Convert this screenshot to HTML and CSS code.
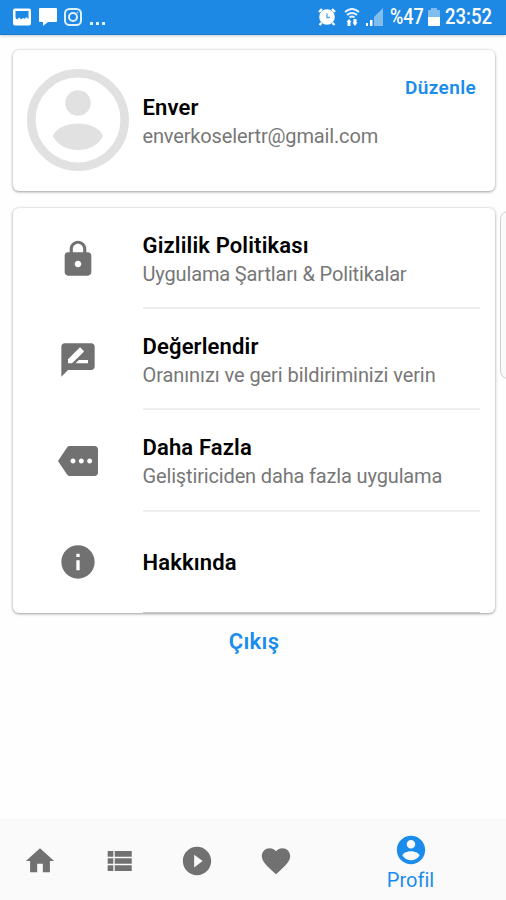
FILE: index.html
```html
<!DOCTYPE html>
<html lang="tr">
<head>
<meta charset="utf-8">
<title>Profil</title>
<link rel="stylesheet" href="styles.css">
</head>
<body>
<header class="status">
  <div class="status-left">
    <svg width="18" height="18" viewBox="0 0 18 18"><path fill="#fff" fill-rule="evenodd" d="M2 .5h14q2 0 2 2v13q0 2-2 2H2q-2 0-2-2v-13q0-2 2-2zM2.500 3v7l1.500 1.500 2.500-2 1.500 2 2-1.500 2 1 1-2 2.500 2V3z"/></svg>
    <svg width="18" height="18" viewBox="0 0 18 18"><path fill="#fff" d="M1 0h16q1 0 1 1v12q0 1-1 1H9l-5 4v-4H1q-1 0-1-1V1q0-1 1-1z"/></svg>
    <svg width="18" height="18" viewBox="0 0 18 18" fill="none" stroke="#dff1ff" stroke-width="2"><rect x="1" y="1" width="16" height="16" rx="4.500"/><circle cx="9" cy="9" r="4"/><circle cx="13.500" cy="4.500" r=".4" stroke-width="1"/></svg>
    <svg class="dots" width="16" height="4" viewBox="0 0 16 4" fill="#dff1ff"><path d="M0 0h3v3H0zM6 0h3v3H6zM12 0h3v3h-3z"/></svg>
  </div>
  <div class="status-right">
    <svg width="18" height="18" viewBox="0 0 18 18"><path d="M1 4l3-3M14 1l3 3M3.500 15l-2 2M14.500 15l2 2" stroke="#fff" stroke-width="2.400"/><circle cx="9" cy="9" r="7.800" fill="#fff"/><path d="M9 5.500v4h3" stroke="#5aa9ec" stroke-width="1.400" fill="none"/></svg>
    <svg class="wifi" width="16" height="18" viewBox="0 0 16 18" fill="none" stroke="#e4f3ff" stroke-width="2"><path d="M1 4q7-6 14 0M3 7q5-4 10 0M5.500 9.500q2.500-2 5 0"/><path fill="#fff" stroke="none" d="M2.500 14l2.500-3 2.500 3H6.500v4h-3v-4zM8.500 14.500h1V11h3v3.500h1L11 18z"/></svg>
    <svg class="signal" width="18" height="18" viewBox="0 0 18 18"><path fill="#82bdf0" d="M18 0v18H9V9z"/><path fill="#fff" d="M1 15h2v3H1zM5 12h2.500v6H5z"/></svg>
    <span class="percent">%47</span>
    <svg class="battery" width="12" height="18" viewBox="0 0 12 18"><path fill="#82bdf0" d="M3 0h6v2h2q1 0 1 1v7H0V3q0-1 1-1h2z"/><path fill="#fff" d="M0 9h12v8q0 1-1 1H1q-1 0-1-1z"/></svg>
    <span class="clock">23:52</span>
  </div>
</header>

<main class="content">
  <section class="card profile">
    <svg class="avatar" width="102" height="102" viewBox="0 0 102 102" fill="#e1e1e1"><circle cx="51" cy="51" r="46.700" fill="none" stroke="#e1e1e1" stroke-width="8.600"/><circle cx="51" cy="34" r="12.800"/><path d="M26.500 68.500Q25.500 67 26.500 65.500C31 58 41 54.500 51 54.500s20 3.500 24.500 11q1 1.500 0 3C70 77 61 81 51 81s-19-4-24.500-12.500z"/></svg>
    <div class="identity">
      <h1 class="title">Enver</h1>
      <p class="sub">enverkoselertr@gmail.com</p>
    </div>
    <a class="edit">Düzenle</a>
  </section>

  <section class="card menu">
    <div class="row">
      <svg class="icon" viewBox="0 0 24 24"><path d="M18 8h-1V6c0-2.760-2.240-5-5-5S7 3.240 7 6v2H6c-1.100 0-2 .9-2 2v10c0 1.100.9 2 2 2h12c1.100 0 2-.9 2-2V10c0-1.100-.9-2-2-2zm-6 9c-1.100 0-2-.9-2-2s.9-2 2-2 2 .9 2 2-.9 2-2 2zm3.100-9H8.900V6c0-1.710 1.390-3.100 3.100-3.100s3.100 1.390 3.100 3.100v2z"/></svg>
      <div class="text"><h2 class="title">Gizlilik Politikası</h2><p class="sub">Uygulama Şartları &amp; Politikalar</p></div>
    </div>
    <div class="row">
      <svg class="icon" viewBox="0 0 24 24"><path d="M20 2H4c-1.100 0-1.990.9-1.990 2L2 22l4-4h14c1.100 0 2-.9 2-2V4c0-1.100-.9-2-2-2zM6 14v-2.470l6.880-6.880c.2-.2.510-.2.710 0l1.770 1.770c.2.200.2.510 0 .710L8.470 14H6zm12 0h-7.500l2-2H18v2z"/></svg>
      <div class="text"><h2 class="title">Değerlendir</h2><p class="sub wide">Oranınızı ve geri bildiriminizi verin</p></div>
    </div>
    <div class="row">
      <svg class="icon" viewBox="0 0 24 24"><path d="M22 3H7c-.690 0-1.230.350-1.590.880L0 12l5.410 8.110c.360.530.970.890 1.660.890H22c1.100 0 2-.9 2-2V5c0-1.100-.9-2-2-2zM9 13.500c-.830 0-1.500-.670-1.500-1.500s.670-1.500 1.500-1.500 1.500.670 1.500 1.500-.670 1.500-1.500 1.500zm5 0c-.830 0-1.500-.670-1.500-1.500s.670-1.500 1.500-1.500 1.500.670 1.500 1.500-.670 1.500-1.500 1.500zm5 0c-.830 0-1.500-.670-1.500-1.500s.670-1.500 1.500-1.500 1.500.670 1.500 1.500-.670 1.500-1.500 1.500z"/></svg>
      <div class="text"><h2 class="title">Daha Fazla</h2><p class="sub">Geliştiriciden daha fazla uygulama</p></div>
    </div>
    <div class="row">
      <svg class="icon" viewBox="0 0 24 24"><path d="M12 2C6.480 2 2 6.480 2 12s4.480 10 10 10 10-4.480 10-10S17.520 2 12 2zm1 15h-2v-6h2v6zm0-8h-2V7h2v2z"/></svg>
      <div class="text"><h2 class="title">Hakkında</h2></div>
    </div>
  </section>

  <a class="logout">Çıkış</a>
</main>
<div class="edge-handle"></div>

<nav class="tabs">
  <a class="tab"><svg viewBox="0 0 24 24"><path d="M10 20v-6h4v6h5v-8h3L12 3 2 12h3v8z"/></svg></a>
  <a class="tab"><svg viewBox="0 0 24 24"><path d="M4 14h4v-4H4v4zm0 5h4v-4H4v4zM4 9h4V5H4v4zm5 5h12v-4H9v4zm0 5h12v-4H9v4zM9 5v4h12V5H9z"/></svg></a>
  <a class="tab"><svg viewBox="0 0 24 24"><path d="M12 2C6.480 2 2 6.480 2 12s4.480 10 10 10 10-4.480 10-10S17.520 2 12 2zm-2 14.500v-9l6 4.500-6 4.500z"/></svg></a>
  <a class="tab"><svg viewBox="0 0 24 24"><path d="M12 21.350l-1.450-1.320C5.400 15.360 2 12.280 2 8.500 2 5.420 4.420 3 7.500 3c1.740 0 3.410.810 4.500 2.090C13.090 3.810 14.760 3 16.500 3 19.580 3 22 5.420 22 8.500c0 3.780-3.400 6.860-8.550 11.540L12 21.350z"/></svg></a>
  <a class="tab active"><svg viewBox="0 0 24 24"><path d="M12 2C6.480 2 2 6.480 2 12s4.480 10 10 10 10-4.480 10-10S17.520 2 12 2zm0 3c1.660 0 3 1.340 3 3s-1.340 3-3 3-3-1.340-3-3 1.340-3 3-3zm0 14.200c-2.500 0-4.710-1.280-6-3.220.030-1.990 4-3.080 6-3.080 1.990 0 5.970 1.090 6 3.080-1.290 1.940-3.500 3.220-6 3.220z"/></svg><span>Profil</span></a>
</nav>
</body>
</html>
```
FILE: styles.css
```css
* { box-sizing: border-box; }
body {
  margin: 0;
  height: 900px;
  display: flex;
  flex-direction: column;
  overflow: hidden;
  background: #fefefe;
  font-family: Roboto, sans-serif;
}
h1, h2, p { margin: 0; }
svg { display: block; flex: none; }

.status {
  height: 35px;
  flex: none;
  display: flex;
  justify-content: space-between;
  padding: 0 14px 0 13px;
  background: #1e88e5;
  border-bottom: 1px solid #1a7ace;
  box-shadow: 0 1px 3px rgba(0, 0, 0, .2);
  color: #fff;
}
.status-left, .status-right { display: flex; align-items: center; }
.status-left { gap: 7.500px; }
.dots { margin-top: 13px; }
.status-right { font-size: 22px; line-height: 36px; }
.wifi { margin-left: 8px; }
.signal { margin-left: 5px; }
.percent { margin-left: 7px; width: 34px; }
.battery { margin-left: 4px; }
.clock { margin-left: 5px; width: 47px; }
.percent, .clock { white-space: nowrap; font-weight: 500; transform-origin: 0 50%; }
.percent { transform: scaleX(.82); }
.clock { transform: scaleX(.84); }

.content {
  flex: 1;
  display: flex;
  flex-direction: column;
  padding: 15px 11px 0 13px;
}
.card {
  background: #fff;
  border-radius: 6px;
  box-shadow: 0 1px 3px rgba(0, 0, 0, .34), 0 0 3px rgba(0, 0, 0, .12);
}
.profile {
  height: 141px;
  display: flex;
  align-items: flex-start;
  padding: 19px 19px 0 14px;
}
.identity { margin: 24px 0 0 13.500px; flex: 1; }
.title { font-size: 22px; line-height: 30px; font-weight: 600; letter-spacing: .15px; color: #000; white-space: nowrap; }
.sub { margin-top: -1px; font-size: 20px; line-height: 28px; letter-spacing: -.15px; color: #777; white-space: nowrap; }
.sub.wide { letter-spacing: -.08px; }
.edit { margin-top: 5px; font-size: 19px; line-height: 28px; font-weight: 600; letter-spacing: .35px; color: #1a8cec; }

.menu { margin-top: 17px; height: 405px; }
.row {
  height: 101.200px;
  display: grid;
  grid-template-columns: 129.500px 1fr;
  padding-right: 15px;
}
.icon { width: 40px; height: 40px; margin: 30.500px 0 0 44.800px; fill: #717171; }
.text { padding-top: 23px; border-bottom: 2px solid #efefef; }
.row:last-child .text { padding-top: 36px; border-bottom: 1px solid #c8c8c8; }

.logout {
  align-self: center;
  margin-top: 14px;
  font-size: 22px;
  line-height: 30px;
  font-weight: 600;
  letter-spacing: .3px;
  color: #1a8cec;
}
.edge-handle {
  position: absolute;
  left: 500px;
  top: 211px;
  width: 16px;
  height: 168px;
  border: 1px solid #cfcfcf;
  border-radius: 8px;
  background: #fafafa;
  clip-path: inset(0 10px 0 0);
}

.tabs {
  height: 80px;
  display: grid;
  grid-template-columns: 79px 79px 78px 79px 191px;
  background: #fafafa;
  box-shadow: 0 -1px 1px rgba(0, 0, 0, .02);
}
.tab { display: flex; flex-direction: column; align-items: center; padding-top: 24px; }
.tab svg { width: 34px; height: 34px; fill: #717171; }
.active { padding-top: 13px; color: #1a8cec; font-size: 20px; line-height: 26px; }
.tab.active svg { fill: #1a8cec; }
```
